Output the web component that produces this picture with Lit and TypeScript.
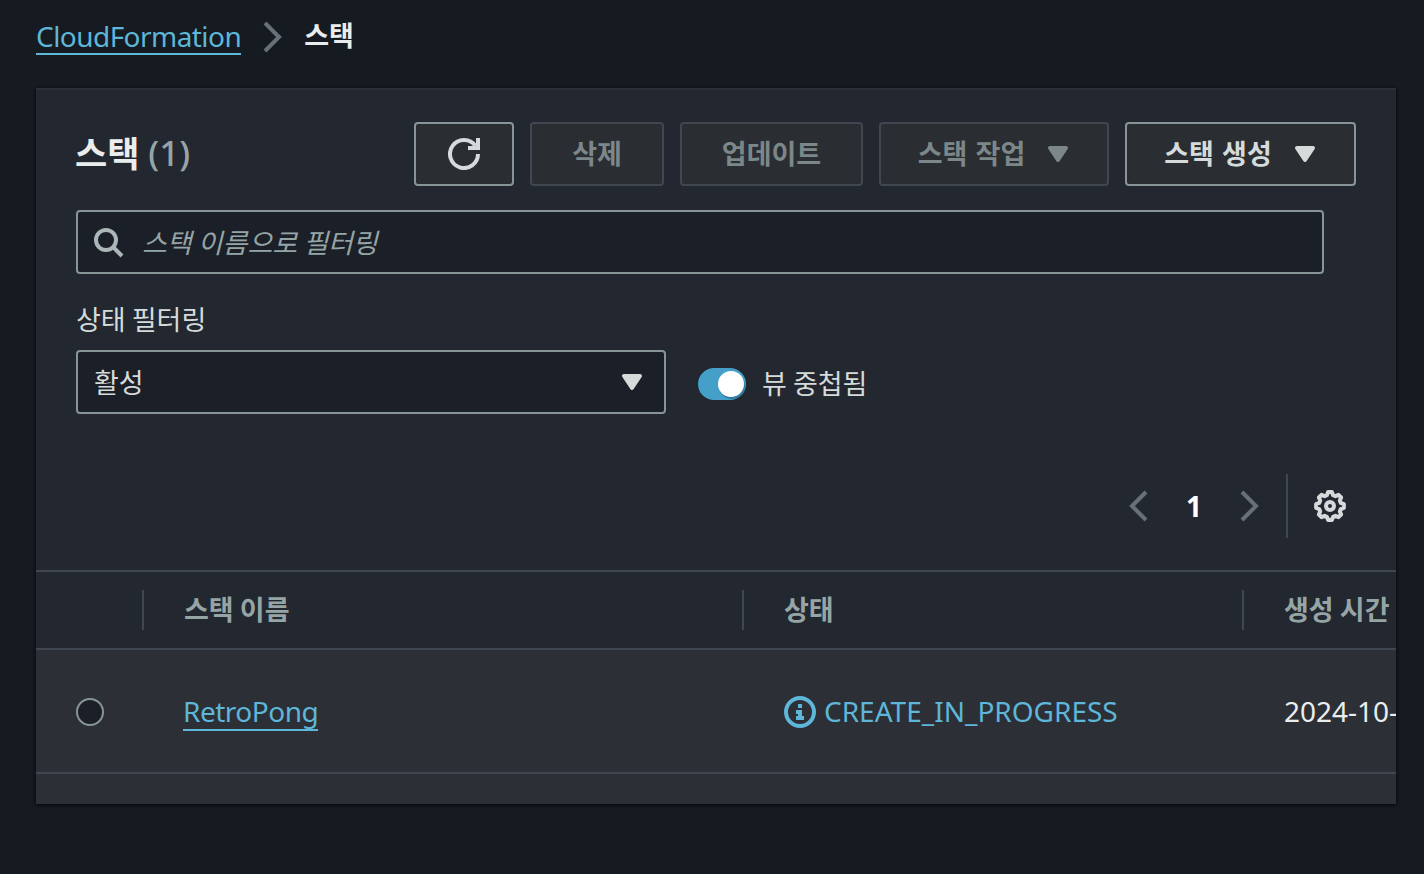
import { LitElement, html, css, svg } from "lit";
import { customElement } from "lit/decorators.js";

function gearPath(): string {
  const teeth = 8;
  const out = 7, inn = 5.6;
  const pts: string[] = [];
  for (let i = 0; i < teeth; i++) {
    const step = (Math.PI * 2) / teeth;
    const a = i * step;
    const seq: [number, number][] = [
      [inn, a - step * 0.36],
      [out, a - step * 0.17],
      [out, a + step * 0.17],
      [inn, a + step * 0.36],
    ];
    for (const [r, t] of seq) {
      pts.push(`${(8 + r * Math.cos(t)).toFixed(2)} ${(8 + r * Math.sin(t)).toFixed(2)}`);
    }
  }
  return "M" + pts.join("L") + "Z";
}

const icon = (content: unknown, cls = "") =>
  html`<svg class="ic ${cls}" viewBox="0 0 16 16" aria-hidden="true">${content}</svg>`;

const caret = () => icon(svg`<path class="fill" d="M4 5h8l-4 6-4-6z"/>`, "caret");
const right = (cls = "") => icon(svg`<path d="M5 15l7-7-7-7"/>`, `chev ${cls}`);
const left = () => icon(svg`<path d="M11 15 4 8l7-7"/>`, "chev");

@customElement("app-root")
export class AppRoot extends LitElement {
  static styles = css`
    :host {
      display: block;
      width: 1424px;
      height: 874px;
      overflow: hidden;
      background: #161a21;
      color: #d5dbdb;
      font-family: "Noto Sans", "Noto Sans CJK KR", sans-serif;
      --kr: "Noto Sans CJK KR", "Noto Sans", sans-serif;
    }
    .ic {
      width: 32px;
      height: 32px;
      fill: none;
      stroke: currentColor;
      stroke-width: 2;
      flex: none;
      display: block;
    }
    .ic .fill {
      fill: currentColor;
      stroke-linejoin: round;
    }
    .chev {
      color: #687078;
    }
    a {
      color: #5eb6d8;
      text-decoration: none;
      border-bottom: 2px solid #5eb6d8;
    }
    .crumbs {
      height: 73px;
      margin-bottom: 15px;
      padding-left: 36px;
      display: flex;
      align-items: center;
      font-size: 28px;
    }
    .crumbs a {
      line-height: 34px;
      letter-spacing: -0.55px;
    }
    .crumbs .chev {
      margin: 0 17px 0 14px;
    }
    .crumbs .cur {
      font-family: var(--kr);
      font-weight: 700;
      font-size: 27px;
      color: #eaeded;
      position: relative;
      top: -2px;
    }
    .card {
      width: 1360px;
      height: 716px;
      margin-left: 36px;
      background: #23272f;
      border-top: 2px solid #2a2e35;
      box-sizing: border-box;
      box-shadow: 0 2px 2px rgba(0, 0, 0, 0.35), 2px 0 3px rgba(0, 0, 0, 0.25), -2px 0 3px rgba(0, 0, 0, 0.25);
      overflow: hidden;
      display: flex;
      flex-direction: column;
    }
    .head {
      padding: 32px 40px 0;
    }
    .titlebar {
      display: flex;
      align-items: center;
      height: 64px;
    }
    h1 {
      margin: 0;
      flex: 1;
      font-size: 35px;
      font-weight: 700;
      font-family: var(--kr);
      color: #eaeded;
      position: relative;
      top: -3px;
      left: -1px;
      word-spacing: 1px;
    }
    h1 span {
      font-family: "Noto Sans", sans-serif;
      font-weight: 500;
      font-size: 35px;
      color: #95a5a6;
      position: relative;
      top: -1px;
    }
    .btns {
      display: flex;
      gap: 16px;
    }
    .btn {
      height: 64px;
      box-sizing: border-box;
      border: 2px solid #879596;
      border-radius: 4px;
      background: #2a2e33;
      color: #d5dbdb;
      font-family: var(--kr);
      font-size: 27px;
      font-weight: 700;
      word-spacing: 2px;
      display: flex;
      align-items: center;
      justify-content: center;
      padding: 0;
    }
    .btn.off {
      border-color: #414750;
      color: #7b8789;
    }
    .btn .t {
      position: relative;
      top: -2px;
    }
    .btn .caret {
      margin-left: 17px;
      margin-right: -4px;
    }
    .b-refresh { width: 100px; }
    .b-del { width: 134px; }
    .b-upd { width: 183px; }
    .b-act { width: 230px; }
    .b-new { width: 231px; }
    .field {
      height: 64px;
      box-sizing: border-box;
      background: #1b1f27;
      border: 2px solid #879596;
      border-radius: 4px;
      display: flex;
      align-items: center;
    }
    .search {
      width: 1248px;
      margin-top: 24px;
      padding-left: 14px;
      gap: 18px;
      font-family: var(--kr);
      font-size: 27px;
      font-style: italic;
      color: #95a5a6;
    }
    .search .ic {
      color: #aab7b8;
    }
    .search span {
      position: relative;
      top: -1px;
    }
    .label {
      margin-top: 26px;
      height: 38px;
      font-family: var(--kr);
      font-size: 27px;
      line-height: 38px;
      color: #d5dbdb;
    }
    .filters {
      display: flex;
      align-items: center;
      gap: 32px;
      margin-top: 12px;
    }
    .select {
      width: 590px;
      padding: 0 16px;
      justify-content: space-between;
      font-family: var(--kr);
      font-size: 27px;
    }
    .select span {
      position: relative;
      top: -1px;
    }
    .toggle {
      display: flex;
      align-items: center;
      gap: 16px;
      font-family: var(--kr);
      font-size: 27px;
    }
    .track {
      width: 48px;
      height: 32px;
      margin-top: 4px;
      border-radius: 16px;
      background: #44a0c9;
      display: flex;
      align-items: center;
      justify-content: flex-end;
      padding: 0 2px;
      box-sizing: border-box;
    }
    .knob {
      width: 26px;
      height: 26px;
      border-radius: 50%;
      background: #fff;
      box-shadow: 1px 2px 0 #2f7a9f;
    }
    .pager {
      margin-top: 60px;
      height: 64px;
      display: flex;
      align-items: center;
      justify-content: flex-end;
      padding-right: 2px;
    }
    .pager .n {
      width: 76px;
      text-align: center;
      font-weight: 700;
      font-size: 28px;
      color: #fff;
    }
    .pager .next {
      margin-right: 22px;
    }
    .pager .sep {
      width: 2px;
      height: 64px;
      background: #414750;
      margin-right: 26px;
    }
    .pager .gear {
      color: #d5dbdb;
      margin-right: 8px;
    }
    .table {
      margin-top: 32px;
      border-top: 2px solid #414750;
      flex: 1;
      display: flex;
      flex-direction: column;
    }
    .row {
      display: grid;
      grid-template-columns: 106px 600px 500px 1fr;
    }
    .thead {
      height: 76px;
      border-bottom: 2px solid #414750;
      align-items: center;
      font-family: var(--kr);
      font-size: 27px;
      font-weight: 700;
      color: #95a5a6;
    }
    .thead > div {
      height: 40px;
      line-height: 38px;
      box-sizing: border-box;
      padding-left: 40px;
      border-left: 2px solid #414750;
      white-space: nowrap;
    }
    .thead > div:first-child {
      border-left: 0;
    }
    .tbody {
      height: 122px;
      background: #2c2f35;
      border-bottom: 2px solid #414750;
      align-items: center;
      font-size: 28px;
    }
    .tbody > div {
      padding-left: 42px;
      white-space: nowrap;
      display: flex;
      align-items: center;
    }
    .tbody > .c-radio {
      padding-left: 40px;
    }
    .tbody > .c-name {
      padding-left: 41px;
      padding-top: 2px;
    }
    .radio {
      width: 28px;
      height: 28px;
      margin-top: 2px;
      box-sizing: border-box;
      border-radius: 50%;
      border: 2px solid #879596;
      background: #1b1f27;
    }
    .tbody a {
      line-height: 36px;
      letter-spacing: -0.5px;
    }
    .status {
      color: #5eb6d8;
      gap: 8px;
    }
    .status .ic {
      margin-top: 2px;
    }
    .date {
      color: #eaeded;
    }
    .rest {
      flex: 1;
      background: #2c2f35;
    }
  `;

  render() {
    return html`
      <nav class="crumbs">
        <a href="#">CloudFormation</a>
        ${right()}
        <span class="cur">스택</span>
      </nav>
      <section class="card">
        <div class="head">
          <div class="titlebar">
            <h1>스택 <span>(1)</span></h1>
            <div class="btns">
              <div class="btn b-refresh">
                ${icon(svg`<path d="M10 5h5V0"/><path d="M15 8a7 7 0 1 1-1.29-4.05"/>`)}
              </div>
              <div class="btn off b-del"><span class="t">삭제</span></div>
              <div class="btn off b-upd"><span class="t">업데이트</span></div>
              <div class="btn off b-act"><span class="t">스택 작업</span>${caret()}</div>
              <div class="btn b-new"><span class="t">스택 생성</span>${caret()}</div>
            </div>
          </div>
          <div class="field search">
            ${icon(svg`<circle cx="7" cy="7" r="5"/><path d="m15 15-4.5-4.5"/>`)}
            <span>스택 이름으로 필터링</span>
          </div>
          <div class="label">상태 필터링</div>
          <div class="filters">
            <div class="field select"><span>활성</span>${caret()}</div>
            <div class="toggle">
              <div class="track"><div class="knob"></div></div>
              <span>뷰 중첩됨</span>
            </div>
          </div>
          <div class="pager">
            ${left()}
            <span class="n">1</span>
            ${right("next")}
            <div class="sep"></div>
            ${icon(svg`<path d="${gearPath()}" stroke-linejoin="round"/><circle cx="8" cy="8" r="2"/>`, "gear")}
          </div>
        </div>
        <div class="table">
          <div class="row thead">
            <div></div>
            <div>스택 이름</div>
            <div>상태</div>
            <div>생성 시간</div>
          </div>
          <div class="row tbody">
            <div class="c-radio"><div class="radio"></div></div>
            <div class="c-name"><a href="#">RetroPong</a></div>
            <div class="status">
              ${icon(svg`<circle cx="8" cy="8" r="7"/><path d="M8 11V8H6"/><path d="M10 11H6"/><path d="M7.99 5H8v.01h-.01z"/>`)}
              <span>CREATE_IN_PROGRESS</span>
            </div>
            <div class="date">2024-10-</div>
          </div>
          <div class="rest"></div>
        </div>
      </section>
    `;
  }
}
